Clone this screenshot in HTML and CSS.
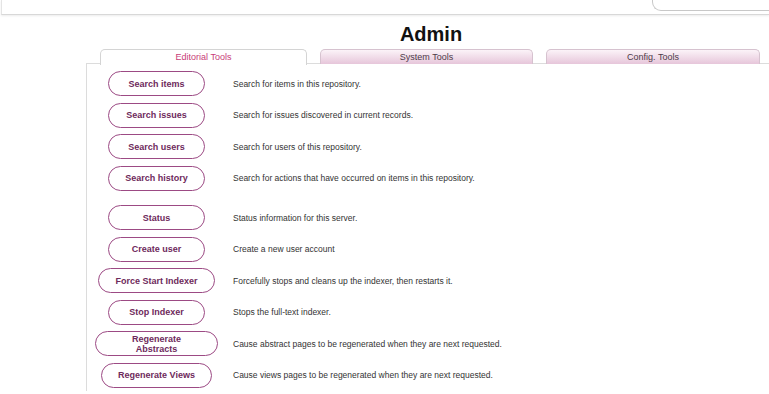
FILE: index.html
```html
<!DOCTYPE html>
<html lang="en">
<head>
    <meta charset="UTF-8">
    <title>Admin</title>
    <link rel="stylesheet" href="styles.css">
</head>
<body>
    <div class="topbar">
        <div class="login-box"></div>
    </div>

    <div class="page">
        <h1 class="page-title">Admin</h1>

        <div class="tabs">
            <div class="tab active">Editorial Tools</div>
            <div class="tab">System Tools</div>
            <div class="tab">Config. Tools</div>
        </div>

        <div class="panel">
            <div class="tool-row">
                <div class="tool-cell"><button class="tool-btn">Search items</button></div>
                <div class="tool-desc">Search for items in this repository.</div>
            </div>
            <div class="tool-row">
                <div class="tool-cell"><button class="tool-btn">Search issues</button></div>
                <div class="tool-desc">Search for issues discovered in current records.</div>
            </div>
            <div class="tool-row">
                <div class="tool-cell"><button class="tool-btn">Search users</button></div>
                <div class="tool-desc">Search for users of this repository.</div>
            </div>
            <div class="tool-row">
                <div class="tool-cell"><button class="tool-btn">Search history</button></div>
                <div class="tool-desc">Search for actions that have occurred on items in this repository.</div>
            </div>

            <div class="tool-sep"></div>

            <div class="tool-row">
                <div class="tool-cell"><button class="tool-btn">Status</button></div>
                <div class="tool-desc">Status information for this server.</div>
            </div>
            <div class="tool-row">
                <div class="tool-cell"><button class="tool-btn">Create user</button></div>
                <div class="tool-desc">Create a new user account</div>
            </div>
            <div class="tool-row">
                <div class="tool-cell"><button class="tool-btn">Force Start Indexer</button></div>
                <div class="tool-desc">Forcefully stops and cleans up the indexer, then restarts it.</div>
            </div>
            <div class="tool-row">
                <div class="tool-cell"><button class="tool-btn">Stop Indexer</button></div>
                <div class="tool-desc">Stops the full-text indexer.</div>
            </div>
            <div class="tool-row">
                <div class="tool-cell"><button class="tool-btn wrap">Regenerate Abstracts</button></div>
                <div class="tool-desc">Cause abstract pages to be regenerated when they are next requested.</div>
            </div>
            <div class="tool-row">
                <div class="tool-cell"><button class="tool-btn">Regenerate Views</button></div>
                <div class="tool-desc">Cause views pages to be regenerated when they are next requested.</div>
            </div>
        </div>
    </div>
</body>
</html>
```

FILE: styles.css
```css
body {
    margin: 0;
    font-family: "Liberation Sans", Arial, sans-serif;
    background: #fff;
    color: #333;
    overflow: hidden;
}

.topbar {
    height: 14px;
    display: flex;
    justify-content: flex-end;
    align-items: flex-start;
    border-left: 1px solid #e4e4e4;
    border-bottom: 1px solid #d8d8d8;
    box-shadow: 0 1px 2px rgba(0,0,0,0.08);
    margin-left: 1px;
}

.login-box {
    width: 116px;
    height: 10px;
    border-left: 1px solid #c8c8c8;
    border-bottom: 1px solid #c8c8c8;
    border-bottom-left-radius: 9px;
}

.page {
    width: 690px;
    margin-left: 86px;
}

.page-title {
    margin: 9px 0 4px;
    text-align: center;
    font-size: 20px;
    line-height: 20px;
    font-weight: bold;
    color: #111;
}

.tabs {
    display: grid;
    grid-template-columns: 207px 213px 214px;
    column-gap: 13px;
    padding-left: 14px;
    height: 15px;
    align-items: end;
}

.tab {
    height: 14px;
    line-height: 14px;
    text-align: center;
    font-size: 9px;
    color: #4e3a48;
    border: 1px solid #d6c2cf;
    border-bottom: none;
    border-radius: 5px 5px 0 0;
    background: linear-gradient(#fbf3f8, #e6c6da);
}

.tab.active {
    height: 15px;
    background: #fff;
    color: #c83c78;
    border-color: #d4d4d4;
    position: relative;
    top: 1px;
}

.panel {
    border-left: 1px solid #dcdcdc;
    border-top: 1px solid #dcdcdc;
    padding-top: 4px;
}

.tool-row {
    display: flex;
    align-items: center;
    height: 31.5px;
}

.tool-sep {
    height: 8px;
}

.tool-cell {
    width: 139px;
    display: flex;
    justify-content: center;
}

.tool-btn {
    min-width: 97px;
    height: 25px;
    padding: 0 16px;
    border: 1px solid #9c4a84;
    border-radius: 13px;
    background: #fff;
    color: #6e2a5c;
    font-family: inherit;
    font-size: 9px;
    font-weight: bold;
    line-height: 10px;
    white-space: nowrap;
}

.tool-btn.wrap {
    width: 123px;
    white-space: normal;
}

.tool-desc {
    padding-left: 7px;
    font-size: 8.5px;
    color: #333;
}
```
